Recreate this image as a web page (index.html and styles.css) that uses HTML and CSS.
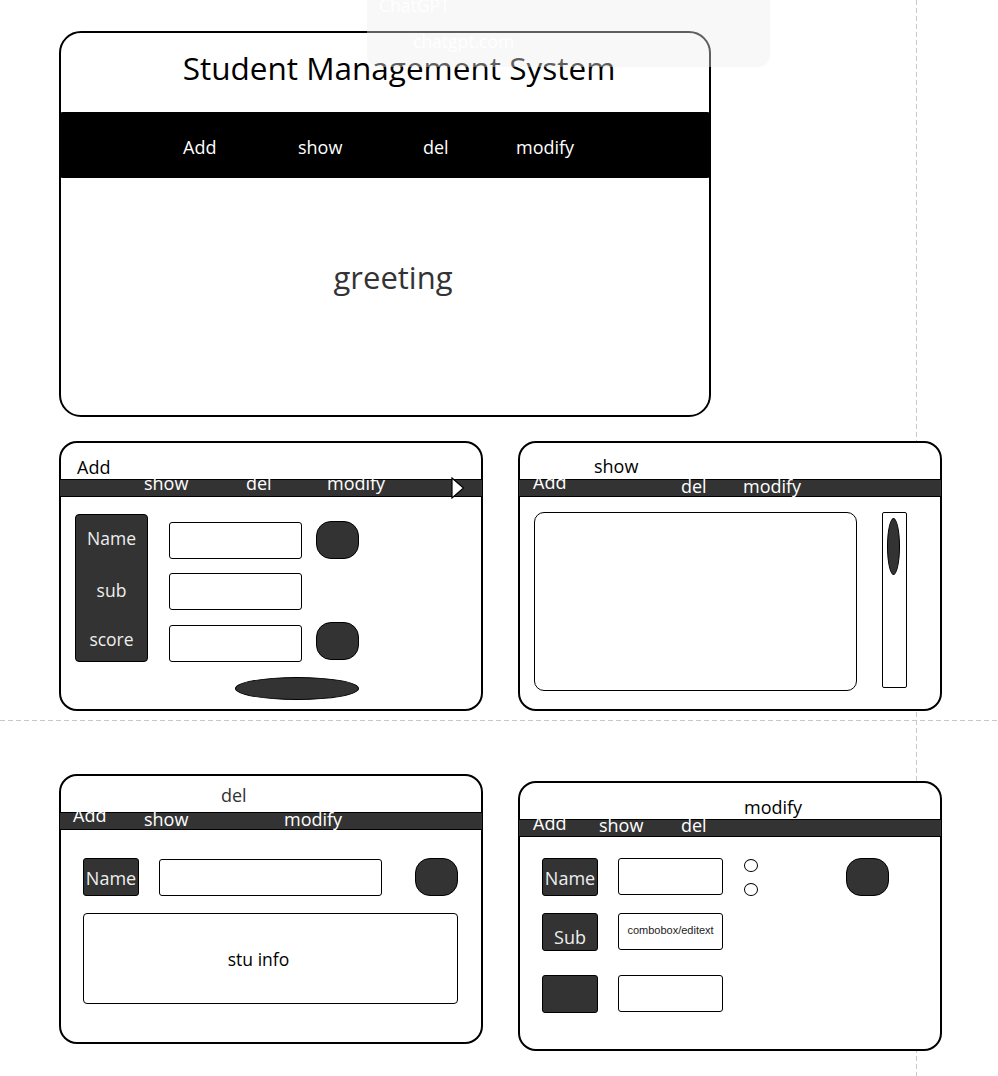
FILE: index.html
```html
<!DOCTYPE html>
<html lang="en">
<head>
    <meta charset="UTF-8">
    <title>Student Management System - mockup</title>
    <link rel="stylesheet" href="styles.css">
</head>
<body>
    <div class="canvas">
        <div class="page-line page-line-v"></div>
        <div class="page-line page-line-h"></div>

        <!-- main window -->
        <div class="card card-main">
            <div class="title">Student Management System</div>
            <div class="main-nav">
                <span class="t" style="left: 124px">Add</span>
                <span class="t" style="left: 239px">show</span>
                <span class="t" style="left: 364px">del</span>
                <span class="t" style="left: 457px">modify</span>
            </div>
            <div class="greeting">greeting</div>
        </div>

        <!-- add window -->
        <div class="card card-add">
            <span class="t dark" style="left: 16px; top: 13px">Add</span>
            <div class="bar">
                <span class="t" style="left: 84px; top: -8px">show</span>
                <span class="t" style="left: 186px; top: -8px">del</span>
                <span class="t" style="left: 267px; top: -8px">modify</span>
            </div>
            <svg class="arrow" width="14" height="22" viewBox="0 0 14 22">
                <path d="M1 1 L12.5 11 L1 21 Z" fill="#fff" stroke="#000" stroke-width="1.2"/>
            </svg>
            <div class="label-col">
                <span>Name</span>
                <span>sub</span>
                <span>score</span>
            </div>
            <div class="input" style="left: 108px; top: 79px; width: 133px"></div>
            <div class="input" style="left: 108px; top: 130px; width: 133px"></div>
            <div class="input" style="left: 108px; top: 182px; width: 133px"></div>
            <div class="btn-round" style="left: 255px; top: 78px"></div>
            <div class="btn-round" style="left: 255px; top: 179px"></div>
            <div class="btn-oval"></div>
        </div>

        <!-- show window -->
        <div class="card card-show">
            <span class="t dark" style="left: 74px; top: 12px">show</span>
            <div class="bar">
                <span class="t" style="left: 14px; top: -9px">Add</span>
                <span class="t" style="left: 162px; top: -5px">del</span>
                <span class="t" style="left: 224px; top: -5px">modify</span>
            </div>
            <div class="list-box"></div>
            <div class="scroll-track"><div class="scroll-thumb"></div></div>
        </div>

        <!-- del window -->
        <div class="card card-del">
            <span class="t grey" style="left: 160px; top: 8px">del</span>
            <div class="bar">
                <span class="t" style="left: 13px; top: -9px">Add</span>
                <span class="t" style="left: 84px; top: -5px">show</span>
                <span class="t" style="left: 224px; top: -5px">modify</span>
            </div>
            <div class="tag" style="left: 22px; top: 82px">Name</div>
            <div class="input" style="left: 98px; top: 83px; width: 223px"></div>
            <div class="btn-round" style="left: 354px; top: 82px"></div>
            <div class="info-box">stu info</div>
        </div>

        <!-- modify window -->
        <div class="card card-modify">
            <span class="t dark" style="left: 224px; top: 13px">modify</span>
            <div class="bar">
                <span class="t" style="left: 14px; top: -8px">Add</span>
                <span class="t" style="left: 80px; top: -6px">show</span>
                <span class="t" style="left: 162px; top: -6px">del</span>
            </div>
            <div class="tag" style="left: 22px; top: 75px">Name</div>
            <div class="tag tag-low" style="left: 22px; top: 130px">Sub</div>
            <div class="tag" style="left: 22px; top: 192px"></div>
            <div class="input" style="left: 98px; top: 75px; width: 105px"></div>
            <div class="input combo" style="left: 98px; top: 130px; width: 105px">combobox/editext</div>
            <div class="input" style="left: 98px; top: 192px; width: 105px"></div>
            <div class="radio" style="left: 224px; top: 76px"></div>
            <div class="radio" style="left: 224px; top: 100px"></div>
            <div class="btn-round" style="left: 326px; top: 75px"></div>
        </div>

        <!-- browser tooltip lying over the canvas -->
        <div class="overlay">
            <div class="overlay-name">ChatGPT</div>
            <div class="overlay-url">chatgpt.com</div>
        </div>
    </div>
</body>
</html>
```

FILE: styles.css
```css
* {
    margin: 0;
    padding: 0;
    box-sizing: border-box;
}

body {
    background-color: #fff;
    font-family: 'Open Sans', 'DejaVu Sans', sans-serif;
    color: #000;
}

.canvas {
    position: relative;
    width: 998px;
    height: 1076px;
    overflow: hidden;
}

.page-line {
    position: absolute;
}

.page-line-v {
    left: 916px;
    top: 0;
    width: 1px;
    height: 1076px;
    background-image: linear-gradient(to bottom, #c8c8c8 60%, transparent 60%);
    background-size: 1px 8px;
}

.page-line-h {
    left: 0;
    top: 720px;
    width: 998px;
    height: 1px;
    background-image: linear-gradient(to right, #c8c8c8 60%, transparent 60%);
    background-size: 8px 1px;
}

.card {
    position: absolute;
    background-color: #fff;
    border: 2px solid #000;
    border-radius: 18px;
}

.card-main {
    left: 59px;
    top: 31px;
    width: 652px;
    height: 386px;
    border-radius: 22px;
}

.card-add {
    left: 59px;
    top: 441px;
    width: 424px;
    height: 270px;
}

.card-show {
    left: 518px;
    top: 441px;
    width: 424px;
    height: 270px;
}

.card-del {
    left: 59px;
    top: 774px;
    width: 424px;
    height: 270px;
}

.card-modify {
    left: 518px;
    top: 781px;
    width: 424px;
    height: 270px;
}

.t {
    position: absolute;
    font-size: 18px;
    line-height: 22px;
    color: #fff;
    white-space: nowrap;
}

.t.dark {
    color: #000;
}

.t.grey {
    color: #333;
}

.title {
    text-align: center;
    font-size: 31.5px;
    line-height: 40px;
    margin-top: 15px;
    padding-left: 28px;
}

.main-nav {
    position: absolute;
    left: -2px;
    top: 79px;
    width: 652px;
    height: 66px;
    background-color: #000;
    border-radius: 4px;
}

.main-nav .t {
    top: 24px;
}

.greeting {
    position: absolute;
    left: 0;
    top: 222px;
    width: 664px;
    text-align: center;
    font-size: 31px;
    line-height: 44px;
    color: #333;
}

.bar {
    position: absolute;
    left: -2px;
    top: 36px;
    width: 424px;
    height: 18px;
    background-color: #333;
    border: 1px solid #000;
}

.arrow {
    position: absolute;
    left: 390px;
    top: 34px;
}

.label-col {
    position: absolute;
    left: 14px;
    top: 71px;
    width: 73px;
    height: 148px;
    background-color: #333;
    border: 1.5px solid #000;
    border-radius: 4px;
    color: #eee;
    font-size: 17.5px;
    display: flex;
    flex-direction: column;
    align-items: center;
    padding-top: 11px;
    gap: 28px;
    line-height: 24px;
}

.label-col span:nth-child(3) {
    margin-top: -3px;
}

.input {
    position: absolute;
    height: 37px;
    background-color: #fff;
    border: 1.5px solid #000;
    border-radius: 3px;
}

.combo {
    font-family: 'Liberation Sans', Arial, sans-serif;
    font-size: 11px;
    color: #222;
    text-align: center;
    line-height: 33px;
}

.btn-round {
    position: absolute;
    width: 43px;
    height: 38px;
    background-color: #333;
    border: 1.5px solid #000;
    border-radius: 15px;
}

.btn-oval {
    position: absolute;
    left: 174px;
    top: 234px;
    width: 124px;
    height: 23px;
    background-color: #333;
    border: 1.5px solid #000;
    border-radius: 50%;
}

.list-box {
    position: absolute;
    left: 14px;
    top: 69px;
    width: 323px;
    height: 179px;
    border: 1.5px solid #000;
    border-radius: 10px;
}

.scroll-track {
    position: absolute;
    left: 362px;
    top: 69px;
    width: 25px;
    height: 176px;
    border: 1.5px solid #000;
    border-radius: 2px;
}

.scroll-thumb {
    width: 13px;
    height: 57px;
    margin: 5px 0 0 4px;
    background-color: #333;
    border: 1.5px solid #000;
    border-radius: 50%;
}

.tag {
    position: absolute;
    width: 56px;
    height: 38px;
    background-color: #333;
    border: 1.5px solid #000;
    border-radius: 3px;
    color: #eee;
    font-size: 18px;
    line-height: 39px;
    text-align: center;
    white-space: nowrap;
}

.tag-low {
    line-height: 46px;
}

.info-box {
    position: absolute;
    left: 22px;
    top: 137px;
    width: 375px;
    height: 91px;
    border: 1.5px solid #000;
    border-radius: 4px;
    font-size: 17.5px;
    text-align: center;
    line-height: 90px;
    padding-right: 24px;
}

.radio {
    position: absolute;
    width: 14px;
    height: 13px;
    border: 1.5px solid #000;
    border-radius: 50%;
    background-color: #fff;
}

.overlay {
    position: absolute;
    left: 367px;
    top: -12px;
    width: 403px;
    height: 79px;
    background-color: rgba(238, 238, 238, 0.4);
    border-radius: 12px;
    color: #fff;
    font-size: 17.5px;
    line-height: 22px;
}

.overlay-name {
    position: absolute;
    left: 12px;
    top: 6px;
}

.overlay-url {
    position: absolute;
    left: 46px;
    top: 42px;
}
```
